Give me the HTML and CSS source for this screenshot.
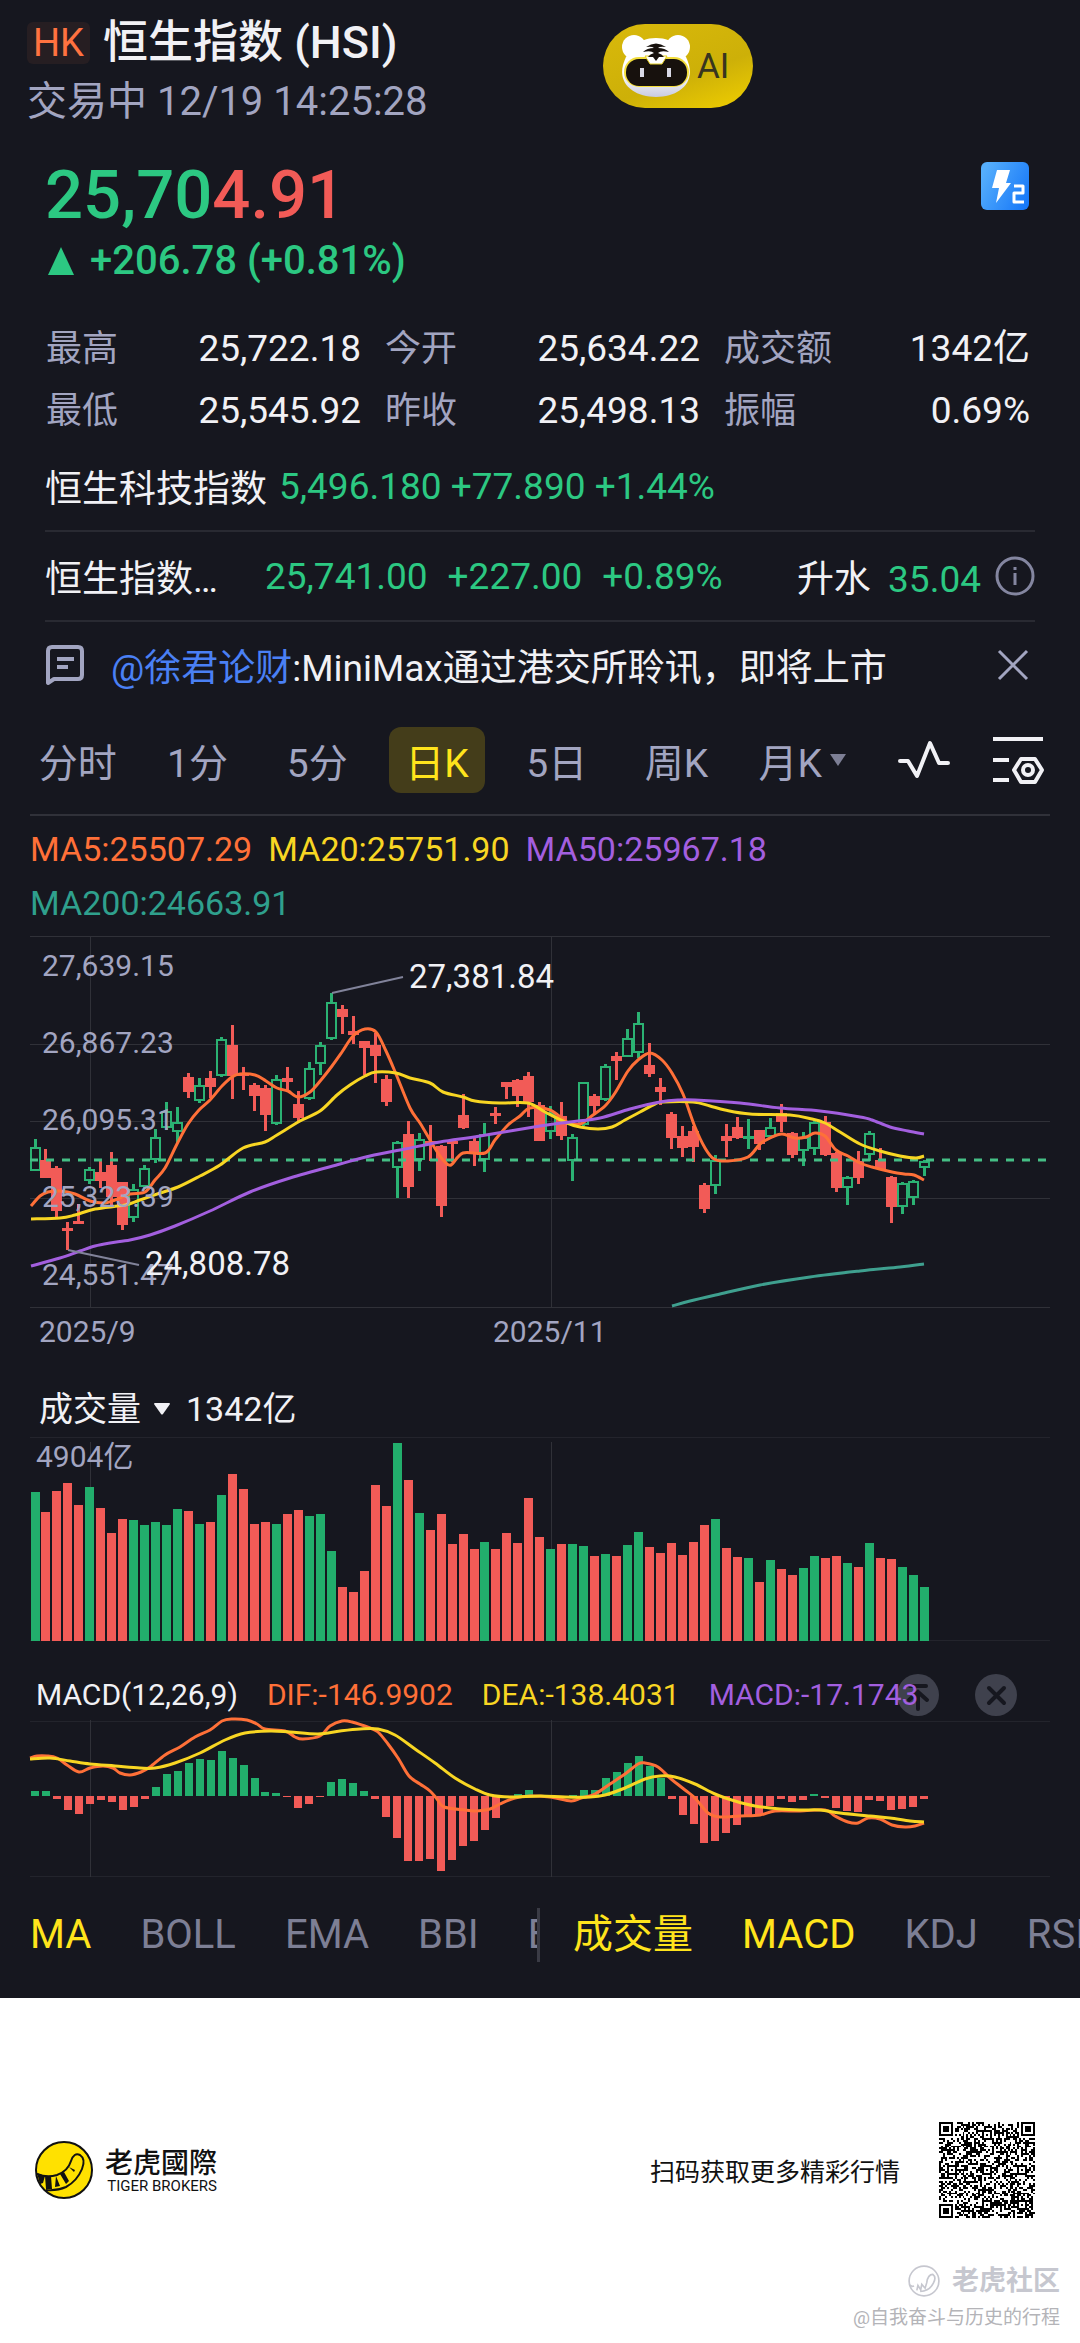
FILE: index.html
```html
<!DOCTYPE html>
<html lang="zh-CN">
<head>
    <meta charset="UTF-8">
    <meta name="viewport" content="width=device-width, initial-scale=1.0">
    <title>恒生指数 (HSI)</title>
    <link rel="stylesheet" href="styles.css">
</head>
<body>
    <main class="quote">
        <header class="header">
            <div>
                <h1 class="title"><span class="market">HK</span>恒生指数 (HSI)</h1>
                <p class="status">交易中 12/19 14:25:28</p>
            </div>
            <button type="button" class="ai-button">
                <svg class="ai-face" viewBox="0 0 76 66" aria-hidden="true">
                    <defs>
                        <linearGradient id="faceFill" x1="0" y1="0" x2="0" y2="1">
                            <stop offset="0.6" stop-color="#ffffff"/>
                            <stop offset="1" stop-color="#c9cbe0"/>
                        </linearGradient>
                    </defs>
                    <circle cx="15" cy="14" r="12" fill="#fff"/>
                    <circle cx="59" cy="14" r="12" fill="#fff"/>
                    <path d="M37 5C56 5 66 18 70 32c5 20-12 32-33 32S-1 52 4 32C8 18 18 5 37 5z" fill="url(#faceFill)"/>
                    <rect x="5" y="24" width="65" height="30" rx="15" fill="#f2dd3c"/>
                    <rect x="7" y="26" width="61" height="27" rx="13" fill="#17110d"/>
                    <path d="M26 23h22l-5 8H31z" fill="#fff" stroke="#e5cf22" stroke-width="1"/>
                    <path d="M27 14q10-7 20 0-6-1-8 1 7 0 11 4-8-2-11 1 4 1 6 4h-5l-3 4-3-4h-5q2-3 6-4-3-3-11-1 4-4 11-4-2-2-8-1z" fill="#17110d"/>
                    <path d="M23 35v9M50 35v9" stroke="#d9d9e6" stroke-width="4"/>
                </svg>
                AI
            </button>
        </header>

        <section class="summary">
            <div class="price-row">
                <div>
                    <p class="price"><span class="up">25,70</span><span class="down">4.91</span></p>
                    <p class="change up">
                        <svg class="change-arrow" viewBox="0 0 26 28" aria-hidden="true"><path d="M13 0l13 28H0z" fill="currentColor"/></svg>
                        +206.78 (+0.81%)
                    </p>
                </div>
                <svg class="level-icon" viewBox="0 0 48 48" role="img" aria-label="L2">
                    <defs>
                        <linearGradient id="levelFill" x1="0" y1="0.3" x2="1" y2="0.8">
                            <stop offset="0" stop-color="#55aefc"/>
                            <stop offset="1" stop-color="#1778f8"/>
                        </linearGradient>
                    </defs>
                    <rect width="48" height="48" rx="6" fill="url(#levelFill)"/>
                    <path d="M16 8h13l-4 13h5L15 41l3-15h-7z" fill="#fff"/>
                    <path d="M33 24h9v7h-9v9h10" fill="none" stroke="#fff" stroke-width="3" stroke-linejoin="round"/>
                </svg>
            </div>

            <dl class="stats">
                <div class="stat"><dt>最高</dt><dd>25,722.18</dd></div>
                <div class="stat"><dt>今开</dt><dd>25,634.22</dd></div>
                <div class="stat"><dt>成交额</dt><dd>1342亿</dd></div>
                <div class="stat"><dt>最低</dt><dd>25,545.92</dd></div>
                <div class="stat"><dt>昨收</dt><dd>25,498.13</dd></div>
                <div class="stat"><dt>振幅</dt><dd>0.69%</dd></div>
            </dl>

            <div class="related related-first">
                <span>恒生科技指数</span>
                <span class="up">5,496.180 +77.890 +1.44%</span>
            </div>
            <div class="related">
                <span class="futures-name">恒生指数…</span>
                <span class="futures up"><span>25,741.00</span><span>+227.00</span><span>+0.89%</span></span>
                <span class="premium">升水 <span class="up">35.04</span></span>
                <button type="button" class="icon-button" aria-label="说明">
                    <svg class="info-icon" viewBox="0 0 40 40" fill="none" stroke="currentColor" stroke-width="3" aria-hidden="true">
                        <circle cx="20" cy="20" r="18"/>
                        <path d="M20 17v12M20 11v3"/>
                    </svg>
                </button>
            </div>
            <div class="news">
                <svg class="news-icon" viewBox="0 0 40 42" fill="none" stroke="currentColor" stroke-width="4" stroke-linejoin="round" aria-hidden="true">
                    <path d="M3 39V7q0-4 4-4h26q4 0 4 4v24q0 4-4 4H9z"/>
                    <path d="M12 15h17M12 23h11"/>
                </svg>
                <p class="news-text"><a href="#" class="author">@徐君论财</a>:MiniMax通过港交所聆讯，即将上市</p>
                <button type="button" class="icon-button" aria-label="关闭">
                    <svg class="close-icon" viewBox="0 0 32 32" fill="none" stroke="currentColor" stroke-width="3" aria-hidden="true"><path d="M2 2l28 28M30 2L2 30"/></svg>
                </button>
            </div>
        </section>

        <nav class="periods">
            <div class="period-list">
                <button type="button" class="period"><span>分时</span></button>
                <button type="button" class="period"><span>1分</span></button>
                <button type="button" class="period"><span>5分</span></button>
                <button type="button" class="period active"><span>日K</span></button>
                <button type="button" class="period"><span>5日</span></button>
                <button type="button" class="period"><span>周K</span></button>
                <button type="button" class="period more">
                    <span>月K</span>
                    <svg class="more-arrow" viewBox="0 0 16 12" aria-hidden="true"><path d="M0 0h16L8 12z" fill="currentColor"/></svg>
                </button>
            </div>
            <button type="button" class="icon-button tool" aria-label="画线">
                <svg class="tool-icon" viewBox="0 0 52 52" fill="none" stroke="currentColor" stroke-width="4" stroke-linejoin="round" stroke-linecap="round" aria-hidden="true"><path d="M2 27h8l9 15L32 9l9 20h9"/></svg>
            </button>
            <button type="button" class="icon-button tool" aria-label="设置">
                <svg class="tool-icon" viewBox="0 0 52 52" fill="none" stroke="currentColor" stroke-width="4" aria-hidden="true">
                    <path d="M1 5h50M1 26h16M1 46h16"/>
                    <path d="M29 25h14l7 11-7 12H29l-7-12z" stroke-linejoin="round"/>
                    <circle cx="36" cy="36" r="5"/>
                </svg>
            </button>
        </nav>

        <section class="chart-section">
            <p class="ma-legend">
                <span class="ma5">MA5:25507.29</span>
                <span class="ma20">MA20:25751.90</span>
                <span class="ma50">MA50:25967.18</span>
                <span class="ma200">MA200:24663.91</span>
            </p>
            <svg class="chart" viewBox="0 0 1080 430" role="img" aria-label="日K">
                <path class="grid" d="M30 6h1020M30 114h1020M30 191h1020M30 268h1020M30 377h1020M90 6v371M551 6v371"/>
                <g id="candles"></g>
                <path class="last-price" d="M30 230h1020"/>
                <g class="lines">
                    <path id="ma200" class="stroke-ma200"/>
                    <path id="ma5" class="stroke-ma5"/>
                    <path id="ma20" class="stroke-ma20"/>
                    <path id="ma50" class="stroke-ma50"/>
                </g>
                <path class="leader" d="M332 63l71-16M68 320l71 15"/>
                <g class="axis-text">
                    <text x="42" y="46">27,639.15</text>
                    <text x="42" y="123">26,867.23</text>
                    <text x="42" y="200">26,095.31</text>
                    <text x="42" y="277">25,323.39</text>
                    <text x="42" y="355">24,551.47</text>
                    <text x="39" y="412">2025/9</text>
                    <text x="493" y="412">2025/11</text>
                </g>
                <g class="mark-text">
                    <text x="409" y="58">27,381.84</text>
                    <text x="145" y="345">24,808.78</text>
                </g>
            </svg>
        </section>

        <section>
            <h2 class="volume-title">
                成交量
                <svg class="volume-arrow" viewBox="0 0 16 12" aria-hidden="true"><path d="M1 0h14q1 0 1 1L9 11q-1 1-2 0L0 1q0-1 1-1z" fill="currentColor"/></svg>
                1342亿
            </h2>
            <svg class="chart" viewBox="0 0 1080 216" role="img" aria-label="成交量">
                <path class="grid faint" d="M30 3h1020M30 206h1020"/>
                <path class="grid" d="M90 8v199M551 8v199"/>
                <g id="volumes"></g>
                <text class="axis-text" x="36" y="33">4904亿</text>
            </svg>
        </section>

        <section>
            <div class="macd-head">
                <p class="macd-legend">
                    <span>MACD(12,26,9)</span>
                    <span class="ma5">DIF:-146.9902</span>
                    <span class="ma20">DEA:-138.4031</span>
                    <span class="ma50">MACD:-17.1743</span>
                </p>
                <div class="macd-actions">
                    <button type="button" class="round-button" aria-label="置顶">
                        <svg viewBox="0 0 42 42" fill="none" stroke="currentColor" stroke-width="4" stroke-linecap="round" aria-hidden="true"><path d="M13 12h16M21 35V19M12 26l9-8 9 8"/></svg>
                    </button>
                    <button type="button" class="round-button" aria-label="移除">
                        <svg viewBox="0 0 42 42" fill="none" stroke="currentColor" stroke-width="4" stroke-linecap="round" aria-hidden="true"><path d="M14 14l15 15M29 14L14 29"/></svg>
                    </button>
                </div>
            </div>
            <svg class="chart" viewBox="0 56 1080 170" role="img" aria-label="MACD">
                <path class="grid faint" d="M30 61h1020M30 216h1020"/>
                <path class="grid" d="M90 60v157M551 60v157"/>
                <g id="macdBars"></g>
                <g class="lines">
                    <path id="dif" class="stroke-ma5"/>
                    <path id="dea" class="stroke-ma20"/>
                </g>
            </svg>
        </section>

        <nav class="indicators">
            <div class="indicator-list main-list">
                <button type="button" class="indicator active">MA</button>
                <button type="button" class="indicator">BOLL</button>
                <button type="button" class="indicator">EMA</button>
                <button type="button" class="indicator">BBI</button>
                <button type="button" class="indicator">ENE</button>
            </div>
            <div class="indicator-list sub-list">
                <button type="button" class="indicator active">成交量</button>
                <button type="button" class="indicator active">MACD</button>
                <button type="button" class="indicator">KDJ</button>
                <button type="button" class="indicator">RSI</button>
            </div>
        </nav>
    </main>

    <footer class="footer">
        <div class="brand-row">
            <svg class="brand-logo" viewBox="0 0 58 58" aria-hidden="true">
                <circle cx="29" cy="29" r="28" fill="#ffe100" stroke="#111" stroke-width="2"/>
                <path d="M2 33q10 4 20 1 11-4 14-14 3-9 9-6 6 4 2 14-5 12-16 18-9 4-20 3" fill="none" stroke="#111" stroke-width="2"/>
                <path d="M2 32l8 3-2 7-3 1zM10 35h6l1 13h-6zM21 35l4 10-5 1zM25 33l4-2 5 9-3 3zM34 26l6 3-1 2z" fill="#111"/>
            </svg>
            <div class="brand-names">
                <strong class="brand-cn">老虎國際</strong>
                <span class="brand-en">TIGER BROKERS</span>
            </div>
            <p class="scan-text">扫码获取更多精彩行情</p>
            <svg id="qr" class="qr" viewBox="0 0 49 49" role="img" aria-label="二维码" shape-rendering="crispEdges"></svg>
        </div>
        <div class="community">
            <p class="community-name">
                <svg class="community-logo" viewBox="0 0 58 58" fill="none" stroke="currentColor" stroke-width="3" aria-hidden="true">
                    <circle cx="29" cy="29" r="27"/>
                    <path d="M3 36q3 4 8 2M16 46l2-9 5 8 2-10 6 7 3-10q2-15 11-15 7 5 1 16-7 14-24 15"/>
                </svg>
                老虎社区
            </p>
            <p class="community-user">@自我奋斗与历史的行程</p>
        </div>
    </footer>
    <script src="charts.js"></script>
</body>
</html>
```

FILE: styles.css
```css
* {
    box-sizing: border-box;
}
body {
    margin: 0;
    background-color: #FFFFFF;
    font-family: Roboto, "Noto Sans CJK SC", sans-serif;
}
h1, h2, p, dl, dd {
    margin: 0;
    font-weight: 400;
}
button {
    padding: 0;
    border: none;
    background: none;
    font: inherit;
    color: inherit;
    white-space: nowrap;
    cursor: pointer;
}
a {
    text-decoration: none;
}
svg {
    display: block;
    flex: none;
}
.quote {
    background-color: #16171F;
    color: #F1F1F5;
    overflow: hidden;
}
.up {
    color: #2CC882;
}
.down {
    color: #F25B57;
}

/* header */
.header {
    display: grid;
    grid-template-columns: 32fr 25fr;
    align-items: start;
    padding: 18px 27px 0;
}
.title {
    display: flex;
    align-items: center;
    gap: 13px;
    font-size: 45px;
    font-weight: 500;
    line-height: 50px;
}
.market {
    padding: 0 6px;
    border-radius: 6px;
    background-color: #261E22;
    color: #FF7240;
    font-size: 38px;
    font-weight: 400;
    line-height: 42px;
}
.status {
    margin-top: 10px;
    color: #A2A5C1;
    font-size: 40px;
    line-height: 48px;
}
.ai-button {
    display: flex;
    align-items: center;
    justify-self: start;
    gap: 2px;
    height: 84px;
    margin-top: 6px;
    padding: 0 24px 0 16px;
    border-radius: 42px;
    background: linear-gradient(160deg, #D9B90B, #CDB008 60%, #F0CF00);
    color: #38351F;
    font-size: 35px;
}
.ai-face {
    width: 76px;
    height: 66px;
}

/* price and stats */
.summary {
    padding: 33px 45px 0;
    font-size: 37px;
}
.price-row {
    display: flex;
    justify-content: space-between;
    align-items: flex-start;
    padding-right: 6px;
}
.price {
    font-size: 67px;
    font-weight: 500;
    line-height: 72px;
}
.change {
    display: flex;
    align-items: center;
    gap: 16px;
    margin-top: 6px;
    padding-left: 3px;
    font-size: 40px;
    font-weight: 500;
    line-height: 48px;
}
.change-arrow {
    width: 26px;
    height: 28px;
}
.level-icon {
    width: 48px;
    height: 48px;
    margin-top: 3px;
}
.stats {
    display: grid;
    grid-template-columns: 35fr 35fr 34fr;
    column-gap: 24px;
    margin-top: 33px;
    padding: 0 5px 0 1px;
    line-height: 62px;
}
.stat {
    display: flex;
    justify-content: space-between;
}
.stat dt {
    color: #A2A5C1;
    font-size: 36px;
}
.related {
    display: flex;
    align-items: center;
    height: 90px;
    border-bottom: 2px solid #292A32;
    white-space: nowrap;
}
.related-first {
    gap: 12px;
}
.futures-name {
    width: 220px;
}
.futures {
    display: flex;
    gap: 20px;
}
.premium {
    margin-left: auto;
    margin-right: 14px;
}
.premium .up {
    margin-left: 8px;
}
.icon-button {
    color: #A2A5C1;
}
.info-icon {
    width: 40px;
    height: 40px;
    color: #8486A0;
}
.news {
    display: flex;
    align-items: center;
    height: 86px;
    padding-right: 6px;
}
.news-icon {
    width: 40px;
    height: 42px;
    color: #A2A5C1;
}
.news-text {
    flex: 1;
    padding-left: 26px;
}
.author {
    color: #4A80F5;
}
.close-icon {
    width: 32px;
    height: 32px;
}

/* period tabs */
.periods {
    display: flex;
    align-items: center;
    margin: 0 30px;
    padding: 19px 0 21px;
    border-bottom: 2px solid #303139;
    color: #A2A5C1;
    font-size: 39px;
}
.period-list {
    display: flex;
    flex: 1;
    margin-left: -12px;
}
.period {
    display: flex;
    flex: 1;
    align-items: center;
    justify-content: center;
    height: 66px;
}
.period.active span {
    display: flex;
    align-items: center;
    height: 66px;
    padding: 0 16px;
    border-radius: 12px;
    background-color: #443D1A;
    color: #FFE41C;
}
.period.more {
    justify-content: flex-end;
    gap: 8px;
}
.more-arrow {
    width: 16px;
    height: 12px;
    margin-right: 10px;
    color: #7D7F95;
}
.tool {
    margin-left: 42px;
    color: #F1F1F5;
}
.tool + .tool {
    margin-right: 6px;
}
.tool-icon {
    width: 52px;
    height: 52px;
}

/* charts */
.chart {
    width: 100%;
    height: auto;
}
.ma-legend {
    display: flex;
    flex-wrap: wrap;
    column-gap: 16px;
    padding: 6px 200px 0 30px;
    font-size: 34px;
    line-height: 54px;
}
.ma5 {
    color: #FF7038;
}
.ma20 {
    color: #F8D623;
}
.ma50 {
    color: #A35FDF;
}
.ma200 {
    color: #2FA08D;
}
.grid {
    fill: none;
    stroke: #303138;
    stroke-width: 1px;
    shape-rendering: crispEdges;
}
.grid.faint {
    stroke: #23242C;
}
.rise {
    fill: none;
    stroke: #2BB273;
    stroke-width: 2px;
}
.fall {
    fill: #F25B57;
    stroke: #F25B57;
    stroke-width: 2px;
}
.wick {
    stroke-width: 3px;
}
.bar-rise {
    fill: #22AE6C;
}
.bar-fall {
    fill: #F25B57;
}
.last-price {
    fill: none;
    stroke: #45BE85;
    stroke-width: 3px;
    stroke-dasharray: 8 8;
}
.lines path {
    fill: none;
    stroke-width: 3px;
    stroke-linejoin: round;
}
.stroke-ma5 {
    stroke: #FF7038;
}
.stroke-ma20 {
    stroke: #F8D623;
}
.stroke-ma50 {
    stroke: #A35FDF;
}
.stroke-ma200 {
    stroke: #3FA08F;
}
.leader {
    fill: none;
    stroke: #81839A;
    stroke-width: 2px;
}
.axis-text {
    fill: #A2A5C1;
    font-size: 30px;
}
.mark-text {
    fill: #F1F1F5;
    font-size: 33px;
}
.volume-title {
    display: flex;
    align-items: center;
    gap: 13px;
    margin-top: 24px;
    padding-left: 39px;
    font-size: 34px;
    line-height: 50px;
}
.volume-arrow {
    width: 16px;
    height: 12px;
    margin-right: 3px;
}
.macd-head {
    position: relative;
    margin-top: 24px;
    padding: 0 36px;
}
.macd-legend {
    position: relative;
    z-index: 1;
    display: flex;
    gap: 29px;
    font-size: 30px;
    line-height: 42px;
    white-space: nowrap;
    pointer-events: none;
}
.macd-actions {
    position: absolute;
    top: 0;
    right: 63px;
    display: flex;
    gap: 36px;
}
.round-button {
    width: 42px;
    height: 42px;
    border-radius: 50%;
    background-color: #3F414D;
    color: #16171F;
}

/* indicator tabs */
.indicators {
    display: flex;
    margin-top: 22px;
    padding-bottom: 36px;
    color: #7D7F95;
    font-size: 40px;
    line-height: 54px;
}
.indicator-list {
    display: flex;
    flex: 1;
    gap: 49px;
    min-width: 0;
    overflow: hidden;
}
.main-list {
    padding-left: 30px;
    border-right: 3px solid #3A3B45;
}
.sub-list {
    padding-left: 33px;
}
.indicator.active {
    color: #FFE41C;
}

/* footer */
.footer {
    padding: 124px 20px 9px 35px;
}
.brand-row {
    display: flex;
    align-items: center;
    padding-right: 25px;
    color: #111111;
}
.brand-logo {
    width: 58px;
    height: 58px;
}
.brand-names {
    display: flex;
    flex-direction: column;
    align-items: flex-end;
    margin-left: 12px;
}
.brand-cn {
    font-family: "Noto Sans CJK TC", sans-serif;
    font-size: 28px;
    font-weight: 500;
    line-height: 32px;
}
.brand-en {
    font-size: 15px;
    line-height: 18px;
}
.scan-text {
    margin-left: auto;
    margin-right: 39px;
    font-size: 25px;
}
.qr {
    width: 96px;
    height: 96px;
}
.community {
    margin-top: 45px;
    color: #C6C7CF;
    text-align: right;
}
.community-name {
    display: flex;
    align-items: center;
    justify-content: flex-end;
    gap: 12px;
    font-size: 27px;
    font-weight: 700;
    line-height: 36px;
}
.community-logo {
    width: 32px;
    height: 32px;
}
.community-user {
    margin-top: 4px;
    color: #B4B4B8;
    font-size: 19px;
    line-height: 30px;
}
```

FILE: charts.js
```js
// [direction, high, body top, body bottom, low]
const candles = [
    ['g', 209, 217, 241, 241], ['r', 219, 230, 248, 248], ['r', 236, 238, 281, 287], ['r', 292, 298, 301, 320],
    ['r', 274, 291, 293, 294], ['g', 237, 239, 251, 254], ['r', 229, 242, 251, 258], ['r', 222, 235, 267, 277],
    ['r', 252, 252, 295, 300], ['g', 254, 259, 288, 292], ['g', 235, 238, 257, 258], ['g', 199, 207, 230, 233],
    ['g', 172, 181, 198, 200], ['g', 177, 192, 202, 213], ['r', 143, 147, 162, 168], ['g', 148, 155, 171, 173],
    ['r', 141, 148, 157, 168], ['g', 107, 109, 146, 147], ['r', 95, 115, 146, 169], ['r', 137, 143, 146, 160],
    ['r', 153, 155, 166, 181], ['r', 155, 158, 185, 201], ['g', 145, 149, 194, 195], ['r', 137, 148, 152, 161],
    ['r', 161, 174, 188, 192], ['g', 132, 138, 169, 170], ['g', 112, 115, 134, 145], ['g', 63, 72, 109, 110],
    ['r', 75, 79, 87, 104], ['r', 86, 101, 105, 114], ['r', 111, 111, 118, 145], ['r', 103, 115, 126, 153],
    ['r', 145, 149, 172, 176], ['g', 211, 212, 238, 268], ['r', 191, 204, 257, 268], ['g', 203, 209, 230, 241],
    ['r', 195, 211, 214, 231], ['r', 215, 216, 276, 287], ['r', 209, 211, 214, 232], ['r', 164, 185, 198, 199],
    ['r', 207, 211, 224, 236], ['g', 193, 204, 230, 242], ['r', 177, 183, 184, 194], ['r', 152, 152, 157, 169],
    ['r', 149, 150, 166, 177], ['r', 142, 146, 172, 187], ['r', 172, 175, 211, 211], ['g', 176, 183, 202, 209],
    ['r', 172, 186, 206, 210], ['g', 204, 207, 231, 251], ['g', 152, 152, 195, 196], ['r', 164, 166, 176, 185],
    ['g', 134, 136, 170, 171], ['r', 122, 126, 131, 150], ['g', 99, 108, 127, 127], ['g', 82, 93, 123, 128],
    ['r', 113, 135, 144, 147], ['r', 148, 157, 162, 175], ['r', 182, 184, 208, 219], ['r', 196, 206, 218, 227],
    ['r', 196, 201, 217, 232], ['r', 253, 255, 279, 283], ['g', 225, 230, 256, 264], ['r', 194, 206, 211, 227],
    ['r', 187, 197, 208, 209], ['g', 189, 206, 207, 219], ['r', 200, 200, 214, 220], ['g', 188, 197, 207, 208],
    ['r', 174, 183, 192, 202], ['r', 202, 203, 225, 228], ['g', 202, 207, 221, 236], ['g', 191, 192, 219, 225],
    ['r', 186, 192, 225, 226], ['r', 222, 223, 258, 262], ['g', 246, 247, 258, 275], ['r', 221, 231, 248, 254],
    ['g', 201, 203, 225, 231], ['r', 218, 230, 239, 239], ['r', 246, 247, 277, 293], ['g', 252, 253, 277, 284],
    ['g', 250, 251, 268, 275], ['g', 230, 231, 238, 246]
];

const volumes = [
    149, 129, 150, 158, 136, 154, 133, 108, 122, 121, 116, 119, 116, 132, 130, 117, 119, 146, 167, 152, 117,
    119, 117, 127, 131, 125, 127, 90, 54, 49, 70, 156, 135, 198, 161, 128, 111, 127, 97, 107, 92, 99, 92, 108,
    98, 143, 104, 92, 97, 97, 95, 85, 87, 85, 96, 109, 94, 88, 98, 86, 99, 116, 122, 93, 84, 83, 59, 81, 72,
    66, 73, 85, 83, 85, 78, 74, 98, 83, 82, 74, 66, 54
];

const macd = [
    5, 5, -3, -14, -18, -8, -4, -6, -14, -11, -3, 9, 22, 25, 33, 37, 36, 45, 38, 31, 18, 4, 3, -1, -12, -8, -1,
    14, 17, 13, 5, -3, -21, -42, -65, -65, -63, -75, -64, -50, -45, -34, -22, -2, 2, 6, 1, 1, -1, 1, 6, 6, 18,
    24, 33, 40, 30, 18, -3, -19, -28, -47, -45, -37, -29, -21, -18, -10, -3, -6, -4, 2, -2, -12, -15, -16, -4,
    -5, -14, -13, -11, -3
];

const lines = {
    ma5: [31,276, 40,266, 48,262, 60,261, 75,264, 90,271, 105,273, 115,270, 130,264, 145,262, 155,250, 165,238,
        177,214, 188,194, 199,180, 210,170, 222,156, 232,147, 240,144, 255,145, 266,151, 277,158, 288,161,
        298,167, 310,162, 321,150, 332,136, 342,122, 353,106, 365,99, 376,102, 386,121, 396,144, 410,178,
        420,193, 430,210, 438,223, 444,231, 451,235, 463,223, 485,223, 495,210, 508,195, 520,186, 530,178,
        550,180, 567,192, 580,194, 593,185, 605,176, 615,163, 628,141, 638,130, 650,123, 662,130, 672,143,
        683,164, 695,197, 705,218, 714,229, 728,231, 748,227, 760,214, 770,208, 782,204, 795,208, 806,207,
        815,203, 825,206, 836,220, 848,226, 860,233, 872,237, 892,242, 904,244, 914,245, 924,250],
    ma20: [31,289, 60,288, 75,285, 95,279, 125,275, 140,270, 160,263, 178,257, 200,246, 220,235, 243,218,
        265,212, 277,205, 300,191, 320,181, 337,165, 350,155, 365,146, 376,142, 396,143, 410,148, 430,153,
        443,162, 463,167, 475,171, 500,173, 528,173, 545,182, 567,193, 580,197, 598,199, 612,197, 625,190,
        640,182, 655,174, 663,172, 693,172, 710,176, 725,180, 750,184, 790,185, 812,189, 825,193, 840,202,
        860,214, 880,221, 900,226, 916,228, 924,226],
    ma50: [31,336, 60,328, 80,321, 95,316, 110,313, 130,310, 150,305, 175,296, 210,281, 250,262, 290,248,
        340,234, 370,226, 405,219, 440,212, 480,206, 540,196, 570,192, 600,188, 630,179, 660,172, 680,170,
        695,170, 740,173, 780,178, 820,181, 860,187, 872,190, 890,197, 908,201, 924,204],
    ma200: [672,376, 690,371, 720,364, 760,355, 810,347, 860,341, 900,337, 924,334],
    dif: [30,98, 37,96, 47,96, 57,98, 67,105, 79,112, 90,108, 103,106, 113,108, 120,113, 130,115, 141,112,
        150,107, 165,95, 180,87, 195,77, 210,70, 222,61, 232,59, 247,60, 257,64, 265,69, 285,71, 295,77,
        303,79, 320,76, 330,66, 342,61, 352,62, 370,68, 378,72, 388,84, 398,98, 409,116, 420,124, 430,131,
        437,139, 444,147, 465,150, 475,151, 490,149, 500,144, 515,138, 530,136, 550,137, 571,141, 581,138,
        595,134, 610,124, 625,114, 638,104, 645,103, 658,107, 670,118, 685,130, 695,138, 708,153, 720,157,
        740,156, 760,155, 775,151, 800,151, 825,150, 835,156, 848,162, 858,163, 868,158, 880,159, 892,165,
        905,167, 915,166, 924,163],
    dea: [30,99, 50,98, 70,101, 90,104, 115,106, 140,108, 155,108, 175,103, 200,93, 225,80, 245,73, 270,71,
        290,72, 318,74, 340,71, 360,69, 378,69, 395,75, 415,89, 435,103, 455,118, 475,129, 490,135, 510,137,
        540,136, 565,137, 590,137, 605,135, 625,128, 645,119, 660,116, 675,117, 695,124, 715,134, 735,141,
        755,146, 780,149, 800,150, 820,150, 840,153, 870,156, 890,158, 910,161, 924,162]
};

const firstX = 35;
const step = 889 / 81;

function barX(i) {
    return firstX + i * step;
}

function rect(cls, x, y, w, h) {
    return `<rect class="${cls}" x="${x}" y="${y}" width="${w}" height="${h}"/>`;
}

// Smooth path through the points
function curve(flat) {
    const p = [];
    for (let i = 0; i < flat.length; i += 2) {
        p.push([flat[i], flat[i + 1]]);
    }
    let d = `M${p[0]}`;
    for (let i = 0; i < p.length - 1; i++) {
        const a = p[i - 1] || p[i];
        const b = p[i];
        const c = p[i + 1];
        const e = p[i + 2] || c;
        d += `C${b[0] + (c[0] - a[0]) / 6},${b[1] + (c[1] - a[1]) / 6} `;
        d += `${c[0] - (e[0] - b[0]) / 6},${c[1] - (e[1] - b[1]) / 6} ${c}`;
    }
    return d;
}

document.getElementById('candles').innerHTML = candles.map(([dir, high, top, bottom, low], i) => {
    // whole pixels keep the outlines sharp
    const x = Math.round(barX(i) - 0.5);
    const cls = dir === 'g' ? 'rise' : 'fall';
    const body = rect(cls, x - 4, top + 1, 9, Math.max(bottom - top - 2, 1));
    return `<path class="${cls} wick" d="M${x + 0.5} ${high}V${top}M${x + 0.5} ${bottom}V${low}"/>${body}`;
}).join('');

document.getElementById('volumes').innerHTML = volumes.map((h, i) => {
    return rect(candles[i][0] === 'g' ? 'bar-rise' : 'bar-fall', Math.round(barX(i) - 4.5), 207 - h, 9, h);
}).join('');

document.getElementById('macdBars').innerHTML = macd.map((v, i) => {
    return rect(v > 0 ? 'bar-rise' : 'bar-fall', Math.round(barX(i) - 4), v > 0 ? 136 - v : 136, 8, Math.abs(v));
}).join('');

Object.keys(lines).forEach(id => {
    document.getElementById(id).setAttribute('d', curve(lines[id]));
});

// QR modules
const size = 49;
let seed = 20251219;
let cells = '';

function square(cx, cy, x, y, outer) {
    const r = Math.max(Math.abs(x - cx), Math.abs(y - cy));
    if (r > outer) return null;
    return outer === 4 ? r === 3 || r < 2 : r !== 1;
}

for (let y = 0; y < size; y++) {
    for (let x = 0; x < size; x++) {
        seed = (seed * 16807) % 2147483647;
        let on = seed / 2147483647 > 0.48;
        if (y === 6 || x === 6) on = (x + y) % 2 === 0;
        for (const [cx, cy] of [[24, 6], [6, 24], [24, 24], [42, 24], [24, 42], [42, 42]]) {
            on = square(cx, cy, x, y, 2) ?? on;
        }
        for (const [cx, cy] of [[3, 3], [45, 3], [3, 45]]) {
            on = square(cx, cy, x, y, 4) ?? on;
        }
        if (on) cells += `M${x} ${y}h1v1h-1z`;
    }
}
document.getElementById('qr').innerHTML = `<path d="${cells}"/>`;
```
